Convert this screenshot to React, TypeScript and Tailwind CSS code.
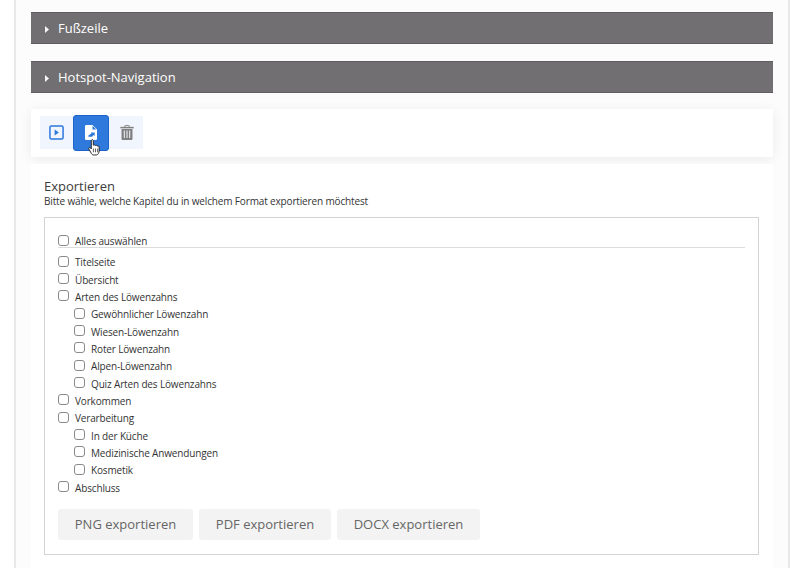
import React from 'react';

const chapters: { label: string; nested?: boolean }[] = [
  { label: 'Titelseite' },
  { label: 'Übersicht' },
  { label: 'Arten des Löwenzahns' },
  { label: 'Gewöhnlicher Löwenzahn', nested: true },
  { label: 'Wiesen-Löwenzahn', nested: true },
  { label: 'Roter Löwenzahn', nested: true },
  { label: 'Alpen-Löwenzahn', nested: true },
  { label: 'Quiz Arten des Löwenzahns', nested: true },
  { label: 'Vorkommen' },
  { label: 'Verarbeitung' },
  { label: 'In der Küche', nested: true },
  { label: 'Medizinische Anwendungen', nested: true },
  { label: 'Kosmetik', nested: true },
  { label: 'Abschluss' },
];

const SectionBar = ({ title }: { title: string }) => (
  <div className="flex h-[32px] items-center border-y border-y-[#5f5d5f] bg-[#716f71] pl-[14px] pt-[2px] text-[13px] font-medium text-white">
    <svg className="mr-[9px] h-[7px] w-[4px]" viewBox="0 0 4 7">
      <path d="M0 0l4 3.5L0 7z" fill="#f7f7f7" />
    </svg>
    {title}
  </div>
);

const CheckRow = ({ label, nested }: { label: string; nested?: boolean }) => (
  <label className={`flex h-[17.35px] items-center text-[10px] leading-none tracking-[-0.15px] text-[#333] ${nested ? 'pl-[16px]' : ''}`}>
    <span className="mr-[6px] mb-[2px] h-[11px] w-[11px] rounded-[3px] border border-[#8a8a8a] bg-white" />
    {label}
  </label>
);

export default function App() {
  return (
    <div className="h-[568px] overflow-hidden bg-white pl-[14px] pr-[10px] font-['Open_Sans',sans-serif]">
      <div className="h-full border-x-2 border-x-[#e8e8e8] bg-[#fcfcfc] px-[15px] pt-[12px]">
        <div className="flex flex-col gap-[17px]">
          <SectionBar title="Fußzeile" />
          <SectionBar title="Hotspot-Navigation" />
        </div>

        <div className="mt-[15.5px] flex h-[48px] items-center bg-white pl-[9px] shadow-[0_2px_12px_rgba(0,0,0,0.07)]">
          <div className="flex h-[33px] items-center bg-[#f1f6fe]">
            <button className="flex h-full w-[33px] items-center justify-center">
              <svg className="h-[15px] w-[15px]" viewBox="0 0 16 16">
                <rect x="1" y="1" width="14" height="14" rx="1.5" fill="none" stroke="#2b78de" strokeWidth="1.6" />
                <path d="M6 4.8l4.5 3.2L6 11.2z" fill="#2b78de" />
              </svg>
            </button>
            <button className="relative flex h-[36px] w-[36px] items-center justify-center rounded-[3px] border border-[#1b63c7] bg-[#2f79dc]">
              <svg className="h-[15px] w-[12px]" viewBox="0 0 12 15">
                <path d="M1.200 0h6.300L12 4.500v9.300a1.200 1.200 0 0 1-1.200 1.200H1.200A1.200 1.200 0 0 1 0 13.800V1.200A1.200 1.200 0 0 1 1.200 0z" fill="#fff" />
                <path d="M7.500.8v3.700h3.700z" fill="#2f79dc" />
                <path d="M6 7.400h3.700v3.700l-1.100-1.100-1.500 1.800H3.400V10.400l2.900-1.900z" fill="#2f79dc" />
              </svg>
              <svg className="absolute left-[14px] top-[23px] h-[17px] w-[14px]" viewBox="0 0 13 16">
                <path d="M3 1.500c0-1.200 1.900-1.200 1.900 0v4.300c.800-.500 1.700-.300 2 .300.700-.300 1.500-.100 1.800.500.800-.200 1.600.200 1.700 1.100v3.600c0 1.600-.900 3.200-2.300 3.700H4.900c-1 0-1.400-.800-2-1.700L.8 9.500c-.700-1 .600-2.100 1.500-1.100l.7.900z" fill="#fff" stroke="#222" strokeWidth="0.9" strokeLinejoin="round" />
                <path d="M5 9v3.500M7 9v3.500M9 9v3.500" stroke="#222" strokeWidth="0.7" />
              </svg>
            </button>
            <button className="flex h-full w-[34px] items-center justify-center pl-[1px]">
              <svg className="h-[15px] w-[14px]" viewBox="0 0 14 15">
                <path d="M4.800 2V1a.6.6 0 0 1 .6-.6h3.200a.6.6 0 0 1 .6.600v1" fill="none" stroke="#808080" strokeWidth="1" />
                <path d="M.3 2.600h13.400" stroke="#808080" strokeWidth="1.500" />
                <path d="M1.500 4h11v10a1 1 0 0 1-1 1h-9a1 1 0 0 1-1-1z" fill="#808080" />
                <path d="M4.300 5.500v7.500M7 5.500v7.500M9.700 5.500v7.500" stroke="#f1f6fe" strokeWidth="1" />
              </svg>
            </button>
          </div>
        </div>

        <div className="mt-[7px] h-[420px] bg-white pl-[13px] pr-[13px] pt-[14px]">
          <h2 className="text-[13px] leading-[16px] text-[#3c3c3c]">Exportieren</h2>
          <p className="text-[10px] leading-[14px] tracking-[-0.15px] text-[#333]">
            Bitte wähle, welche Kapitel du in welchem Format exportieren möchtest
          </p>
          <div className="mt-[9px] mr-[1px] h-[338px] border border-[#d4d4d4] px-[13px] pt-[15px]">
            <div className="h-[15.5px] border-b border-b-[#dcdcdc]">
              <CheckRow label="Alles auswählen" />
            </div>
            <div className="mt-[5.5px]">
              {chapters.map((c) => (
                <CheckRow key={c.label} label={c.label} nested={c.nested} />
              ))}
            </div>
            <div className="mt-[12.5px] flex h-[31px] gap-[6px] text-[13px] text-[#666]">
              <button className="w-[135px] rounded-[3px] bg-[#f3f3f3]">PNG exportieren</button>
              <button className="w-[132px] rounded-[3px] bg-[#f3f3f3]">PDF exportieren</button>
              <button className="w-[143px] rounded-[3px] bg-[#f3f3f3]">DOCX exportieren</button>
            </div>
          </div>
        </div>
      </div>
    </div>
  );
}
